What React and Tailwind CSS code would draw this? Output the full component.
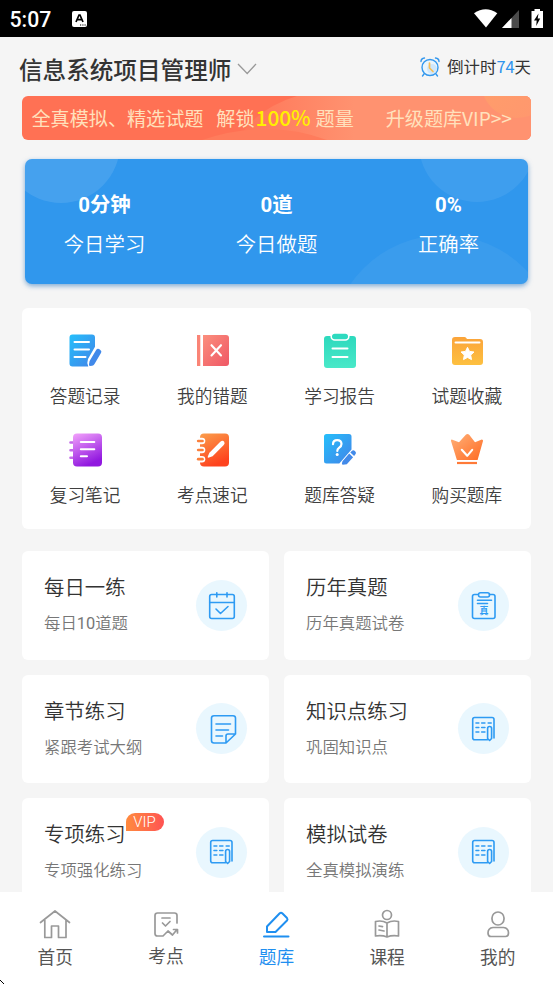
// ── App.jsx ─────────────────────────────────────────────────────────────
// Question bank home screen: status bar, subject header, VIP banner,
// today's stats, shortcut grid, practice cards and the bottom tab bar.
// ─────────────────────────────────────────────────────────────────────────

// Two-stop gradient shared by the filled shortcut icons
function Gradient({ id, from, to, x2 = 1, y2 = 1 }) {
  return (
    <linearGradient id={id} x1="0" y1="0" x2={x2} y2={y2}>
      <stop offset="0" stopColor={from} />
      <stop offset="1" stopColor={to} />
    </linearGradient>
  )
}

// ── Shortcut icons (36x36) ──
const RecordIcon = () => (
  <svg viewBox="0 0 36 36" className="size-9">
    <defs><Gradient id="rec" from="#25bffb" to="#4284e8" /></defs>
    <path d="M4.500 1.500H24a3 3 0 0 1 3 3v9.200l-7 12.300q-1.500 4 .3 7.500H4.500a3 3 0 0 1-3-3v-26a3 3 0 0 1 3-3z" fill="url(#rec)" />
    <path d="M28.300 16.800q1.100-1.700 2.800-.7l1.200.8q1.700 1 .8 2.800l-6.600 11.300q-.9 1.500-2.300 1.700l-2.200.3q-1.300-.2-1-1.700l.6-3.200z" fill="#4189ea" />
    <path d="M6.500 9H21M6.500 16.500H21M6.500 24H17.500" stroke="#fff" strokeWidth="2" strokeLinecap="round" />
  </svg>
)

const WrongIcon = () => (
  <svg viewBox="0 0 36 36" className="size-9">
    <defs><Gradient id="wrong" from="#fb8f7d" to="#ef5765" /></defs>
    <rect x="2" y="2" width="3.300" height="31" fill="#fa8476" />
    <path d="M8 2h23a3 3 0 0 1 3 3v25a3 3 0 0 1-3 3H8z" fill="url(#wrong)" />
    <path d="M16.500 12.200l9.500 10.300M26 12.200l-9.500 10.300" stroke="#fff" strokeWidth="2.100" strokeLinecap="round" />
  </svg>
)

const ReportIcon = () => (
  <svg viewBox="0 0 36 36" className="size-9 overflow-visible">
    <defs><Gradient id="report" from="#2dd9bd" to="#49e8c8" x2={0} /></defs>
    <rect x="2" y="3" width="32" height="32" rx="3" fill="url(#report)" />
    <rect x="9.200" y="0" width="17.600" height="7" rx="3.500" fill="#2ddabf" stroke="#fff" strokeWidth="1.600" />
    <path d="M10.500 15.500H25.500M10.500 24H25.500" stroke="#fff" strokeWidth="2" strokeLinecap="round" />
  </svg>
)

const FavoriteIcon = () => (
  <svg viewBox="0 0 36 36" className="size-9">
    <defs><Gradient id="fav" from="#fba43a" to="#fdc040" x2={0} /></defs>
    <path d="M6 4h9.500q1.500 0 2.500 2H31a3 3 0 0 1 3 3v20a3 3 0 0 1-3 3H6a3 3 0 0 1-3-3V7a3 3 0 0 1 3-3z" fill="url(#fav)" />
    <path d="M6.500 9.500H30.500" stroke="#fff" strokeWidth="2" strokeLinecap="round" />
    <path d="M18.500 14.300l2 4.100 4.500.6-3.300 3.100.8 4.500-4-2.200-4 2.200.8-4.500L12 19l4.500-.6z" fill="#fff" stroke="#fff" strokeLinejoin="round" />
  </svg>
)

const NotesIcon = () => (
  <svg viewBox="0 0 36 36" className="size-9">
    <defs><Gradient id="notes" from="#f3a3fb" to="#9118df" x2={0.4} /></defs>
    <path d="M2.500 10.500h4M2.500 18.200h4M2.500 25.700h4" stroke="#c46be9" strokeWidth="2.600" strokeLinecap="round" />
    <rect x="5" y="1.500" width="29" height="33" rx="4" fill="url(#notes)" />
    <path d="M12.800 10H26.300M12.800 17.200H26.300M12.800 24.200H19" stroke="#fff" strokeWidth="2" strokeLinecap="round" />
  </svg>
)

const QuickIcon = () => (
  <svg viewBox="0 0 36 36" className="size-9">
    <defs><Gradient id="quick" from="#fb9e4b" to="#fe431e" x2={0.4} /></defs>
    <rect x="5" y="1.500" width="29" height="33" rx="4" fill="url(#quick)" />
    {[9, 18, 27.200].map(y => (
      <g key={y}>
        <rect x="1" y={y - 3.3} width="9.300" height="6.600" rx="3.300" fill="#fff" />
        <path d={`M3.200 ${y}H7.500`} stroke="#fb7f3b" strokeWidth="2.700" strokeLinecap="round" />
      </g>
    ))}
    <path d="M25.300 9.800q2.400-2.100 4 .1.900 1.800-.8 3.300L17.600 24.300l-4.400 1.400q-.7-.2-.4-1.300l1.600-3.700z" fill="#fff" />
  </svg>
)

const AnswerIcon = () => (
  <svg viewBox="0 0 36 36" className="size-9">
    <defs><Gradient id="ans" from="#25bffb" to="#4284e8" /></defs>
    <path d="M4.500 2H27a2.500 2.500 0 0 1 2.500 2.500V17.500L17.300 31.500H4.500A2.500 2.500 0 0 1 2 29V4.500A2.500 2.500 0 0 1 4.500 2z" fill="url(#ans)" />
    <path d="M11 12.200q.1-4 4.200-4t4.300 3.700q0 2.200-2.500 4-1.700 1.300-1.700 3" fill="none" stroke="#fff" strokeWidth="2.200" strokeLinecap="round" />
    <circle cx="15.200" cy="22.500" r="1.500" fill="#fff" />
    <path d="M20.500 29.300l6.700-7.700 3.900 3.700-6.300 6.900-4 .6q-1-.1-.9-1.200zM28.300 20.400l1.700-1.700q1.400-1 2.900.3t.9 2.700L32.100 24z" fill="#428ae9" />
  </svg>
)

const CrownIcon = () => (
  <svg viewBox="0 0 36 36" className="size-9">
    <defs><Gradient id="crown" from="#ffb27a" to="#ff6a22" /></defs>
    <path d="M2.700 7.500l7.300 2.700 6.800-7.500q1.700-1.600 3.400 0l5.800 7.500 6.800-2.700q1.500 0 1.200 1.500L28.600 28H7.900L2 9q-.3-1.400.7-1.500z" fill="url(#crown)" />
    <path d="M8 31H28" stroke="#ff7a38" strokeWidth="2.200" />
    <path d="M12.800 17.800l5.400 6 5-6" fill="none" stroke="#fff" strokeWidth="2.100" strokeLinecap="round" strokeLinejoin="round" />
  </svg>
)

// ── Practice card icons (outlined, 30x30) ──
const outline = {
  viewBox: '0 0 30 30',
  className: 'size-[30px]',
  fill: 'none',
  stroke: '#2e9bf3',
  strokeWidth: 1.6,
  strokeLinecap: 'round',
  strokeLinejoin: 'round',
}

const CalendarIcon = () => (
  <svg {...outline}>
    <rect x="2.700" y="4.500" width="24.600" height="24" rx="2" />
    <path d="M2.700 12.500H27.300M9.800 2.700V7M20 2.700V7M9 19l4.500 4.500 7.500-7" />
  </svg>
)

const PaperIcon = () => (
  <svg {...outline}>
    <path d="M8.500 4.500H5.500Q3.500 4.500 3.500 6.500V26.500q0 2 2 2H24q2 0 2-2V6.500q0-2-2-2H20.500" />
    <rect x="9.500" y="2.700" width="11" height="4.300" rx="2" />
    <path d="M8.500 10.300H22.500M8.500 13.500H18.500" />
    <text x="15" y="24.300" textAnchor="middle" stroke="none" fill="#2e9bf3" className="font-['Noto_Sans_CJK_SC',sans-serif] text-[9px] font-bold">真</text>
  </svg>
)

const ChapterIcon = () => (
  <svg {...outline}>
    <path d="M18.500 29H7q-2.500 0-2.500-2.500V4Q4.500 1.700 7 1.700H26q2.500 0 2.500 2.300V20l-9.500 9V22q0-2 2-2h7.500M9 10H23.500M9 16H21.500M9 22h6.500" />
  </svg>
)

const SheetIcon = () => (
  <svg {...outline}>
    <path d="M18.500 25.700H5.700q-2 0-2-2V5.500q0-2 2-2H23q2 0 2 2V24" />
    <path d="M7 9h2.800M12.700 9h3.200M19.200 9h3M7 13.500h2.800M12.700 13.500h3.200M7 18h2.800M12.700 18h3.200" />
    <path d="M18.600 14.500q0-2 2-2t2 2V24.500l-2 2-2-2z" />
  </svg>
)

// ── Data ──
const STATS = [
  { value: '0分钟', label: '今日学习' },
  { value: '0道', label: '今日做题' },
  { value: '0%', label: '正确率' },
]

const SHORTCUTS = [
  { label: '答题记录', Icon: RecordIcon },
  { label: '我的错题', Icon: WrongIcon },
  { label: '学习报告', Icon: ReportIcon },
  { label: '试题收藏', Icon: FavoriteIcon },
  { label: '复习笔记', Icon: NotesIcon },
  { label: '考点速记', Icon: QuickIcon },
  { label: '题库答疑', Icon: AnswerIcon },
  { label: '购买题库', Icon: CrownIcon },
]

const PRACTICES = [
  { title: '每日一练', desc: <>每日<span className="font-normal">10</span>道题</>, Icon: CalendarIcon },
  { title: '历年真题', desc: '历年真题试卷', Icon: PaperIcon },
  { title: '章节练习', desc: '紧跟考试大纲', Icon: ChapterIcon },
  { title: '知识点练习', desc: '巩固知识点', Icon: SheetIcon },
  { title: '专项练习', desc: '专项强化练习', Icon: SheetIcon, vip: true },
  { title: '模拟试卷', desc: '全真模拟演练', Icon: SheetIcon },
]

const TABS = [
  {
    label: '首页',
    icon: <path d="M1.500 14.500L16 3 30.500 14.500M5.800 12V29.500H12.500V18h7V29.500H27V12" />,
  },
  {
    label: '考点',
    up: true,
    icon: <path d="M27 15V7.500Q27 5 24.500 5H7.500Q5 5 5 7.500V25.500Q5 28 7.500 28H13l5-5 4.500 4L27 21.500M23.500 21.500H27.500V25M12 10h8M12.500 15l3 3 4.500-4.500" />,
  },
  {
    label: '题库',
    active: true,
    icon: <path d="M4 28.500H28.500M7 24V18.500L19.500 5.500q1.500-1.400 3 0L27 10q1 1.300 0 2.500L15.500 24z" />,
  },
  {
    label: '课程',
    icon: (
      <>
        <circle cx="16" cy="7" r="4.500" />
        <path d="M4.500 13.500q6.500-1.500 11.500 1.500 5-3 11.500-1.500V28q-6.500-1-11.500 1-5-2-11.500-1zM16 15V29M8 18l3.500.7M8 22l5 1" />
      </>
    ),
  },
  {
    label: '我的',
    icon: (
      <>
        <rect x="10" y="4" width="12" height="13" rx="6" />
        <path d="M11 19.500h10.500q5 .5 5 5.500 0 3.500-3 3.500H9q-3 0-3-3.500 0-5 5-5.500z" />
      </>
    ),
  },
]

function StatusBar() {
  return (
    <div className="flex h-[37px] shrink-0 items-center bg-black pl-[9.500px] text-white">
      <span className="w-[62.500px] pt-0.5 font-['Roboto',sans-serif] text-[21.200px] font-medium">5:07</span>
      <svg viewBox="0 0 15 16" className="h-4 w-[15px]">
        <rect width="15" height="16" rx="2" fill="#fff" />
        <path d="M4 11L7 4h1l3 7M5 8.700h5" fill="none" stroke="#000" strokeWidth="1.700" />
        <path d="M8 14h1.200M10.300 14h1.200M12.500 14h1.200" stroke="#000" strokeWidth="1.200" />
      </svg>
      <svg viewBox="0 0 72 20" className="mr-[7px] ml-auto h-5 w-[72px]">
        <path d="M0 4.300Q11.700-4 23.300 4.300L12 18.500z" fill="#fff" />
        <path d="M45 1V19H28z" fill="#4b4b4b" />
        <path d="M37.500 9V19H28z" fill="#fff" />
        <path d="M57.500 2h3V0h5.500V2h3V19H57.500z" fill="#fff" />
        <path d="M64.500 4.500l-4.500 7h2.700l-.5 5.500 4-7.500h-2.500z" fill="#000" />
      </svg>
    </div>
  )
}

function Header() {
  return (
    <div className="flex h-[59px] shrink-0 items-center pr-[22px] pl-[19px]">
      <h1 className="mt-1.5 text-[23.600px] font-medium whitespace-nowrap">信息系统项目管理师</h1>
      <svg viewBox="0 0 20 12" className="mt-1 ml-1.5 h-3 w-5">
        <path d="M1 1l9.200 9.500L19 1" fill="none" stroke="#999" strokeWidth="1.300" />
      </svg>
      <svg viewBox="0 0 20 20" className="mr-[7px] ml-auto size-5" fill="none" stroke="#3398ee" strokeWidth="1.400" strokeLinecap="round">
        <circle cx="10" cy="10.500" r="8" fill="#e9f5fd" />
        <circle cx="12" cy="12" r="5" fill="#cfe7fb" stroke="none" />
        <path d="M1 4.500Q1 1.500 4.500 1M15.500 1Q19 1.500 19 4.500M4 17l-1.500 2M16 17l1.500 2" />
        <path d="M9.500 6V11l3.500 3.500" stroke="#f7bd55" strokeWidth="1.700" />
      </svg>
      <span className="text-[16.400px] whitespace-nowrap">
        倒计时<span className="text-[#2e93ed]">74</span>天
      </span>
    </div>
  )
}

function Banner() {
  return (
    <div className="relative mx-[22px] flex h-11 shrink-0 items-center overflow-hidden rounded-md bg-[#ff7154] pl-[9.500px] text-[19.100px] whitespace-nowrap text-[#ffe1bd]">
      <svg viewBox="0 0 509 44" className="absolute inset-0 h-11 w-[509px]">
        <defs>
          <linearGradient id="bannerGlow" x1="0" x2="1">
            <stop offset="0" stopColor="#ff7557" />
            <stop offset="0.400" stopColor="#ff9270" />
          </linearGradient>
          <Gradient id="bannerSun" from="#ffa069" to="#ff966f" />
        </defs>
        <path d="M215 44Q235 12 275 0H509V44z" fill="url(#bannerGlow)" />
        <path d="M180 44Q245 22 305 44z" fill="#ff7c5c" />
        <circle cx="495" cy="-14" r="36" fill="url(#bannerSun)" />
      </svg>
      <span className="relative">全真模拟、精选试题</span>
      <span className="relative ml-[13px]">解锁</span>
      <b className="relative ml-px w-[56px] font-['Noto_Sans_CJK_SC',sans-serif] text-[20.800px] font-medium text-[#fff000]">100%</b>
      <span className="relative ml-1">题量</span>
      <span className="relative ml-[32px]">升级题库VIP&gt;&gt;</span>
    </div>
  )
}

function StatsCard() {
  return (
    <div className="relative mx-[25px] mt-[19px] h-[125px] shrink-0 rounded-[7px] bg-[#3097ed] shadow-[0_2px_5px_rgba(48,120,190,0.6)]">
      <svg viewBox="0 0 503 125" className="absolute inset-0 h-[125px] w-[503px] rounded-[7px]">
        <g fill="#fff">
          <circle cx="36" cy="-15" r="59" opacity="0.100" />
          <circle cx="452" cy="-15" r="58" opacity="0.070" />
          <circle cx="419" cy="190" r="114" opacity="0.050" />
        </g>
      </svg>
      <div className="relative -mx-[6.500px] flex pt-[29px] text-white">
        {STATS.map(s => (
          <div key={s.label} className="flex flex-1 flex-col items-center">
            <span className="font-['Roboto','Noto_Sans_CJK_SC',sans-serif] text-[20.400px] leading-[34px] font-bold">{s.value}</span>
            <span className="mt-1 text-[20.400px] leading-[34px] font-[350]">{s.label}</span>
          </div>
        ))}
      </div>
    </div>
  )
}

function ShortcutGrid() {
  return (
    <div className="mx-[22px] mt-6 grid h-[221px] shrink-0 grid-cols-4 content-start rounded-md bg-white pt-[25px]">
      {SHORTCUTS.map(({ label, Icon }) => (
        <div key={label} className="flex h-[99px] flex-col items-center">
          <Icon />
          <span className="mt-[13px] pr-px text-[17.700px] leading-[27px] font-[350] text-[#404040]">{label}</span>
        </div>
      ))}
    </div>
  )
}

function PracticeCard({ title, desc, Icon, vip }) {
  return (
    <div className="flex h-[108.500px] items-center justify-between rounded-md bg-white px-[22px]">
      <div className="pb-[3px]">
        <div className="relative w-fit text-[20.400px] leading-[30px] font-[350]">
          {title}
          {vip && (
            <span className="absolute -top-[5px] left-full flex h-[18px] w-[38px] items-center justify-center rounded-t-[9px] rounded-br-[9px] bg-linear-to-r from-[#ff8a3d] to-[#ff5252] font-['Roboto',sans-serif] text-[15px] font-light text-white">
              VIP
            </span>
          )}
        </div>
        <p className="mt-[11px] font-['Roboto','Noto_Sans_CJK_SC',sans-serif] text-[16.400px] leading-6 font-[350] text-[#777]">{desc}</p>
      </div>
      <div className="flex size-[51px] items-center justify-center rounded-full bg-[#e9f7fe]">
        <Icon />
      </div>
    </div>
  )
}

function TabBar() {
  return (
    <nav className="relative flex h-[92px] shrink-0 bg-white">
      {TABS.map(t => (
        <div
          key={t.label}
          className={`flex flex-1 flex-col items-center pt-4 ${t.active ? 'text-[#1f8ff0]' : 'text-[#555]'}`}
        >
          <svg
            viewBox="0 0 32 32"
            className={`size-8 ${t.active ? 'stroke-[#1f8ff0]' : 'stroke-[#999]'}`}
            fill="none"
            strokeWidth={t.active ? 2 : 1.7}
            strokeLinecap="round"
            strokeLinejoin="round"
          >
            {t.icon}
          </svg>
          <span className={`text-[17.700px] leading-[26px] ${t.up ? 'mt-0.5' : 'mt-[3px]'}`}>{t.label}</span>
        </div>
      ))}
      {/* Pointer tip in the corner */}
      <svg viewBox="0 0 4 4" className="absolute bottom-0 left-0 size-1">
        <path d="M0 0h1v1H0zM1 1h1v1H1zM2 2h1v1H2zM3 3h1v1H3z" fill="#000" />
      </svg>
    </nav>
  )
}

export default function App() {
  return (
    <div className="flex h-[984px] w-[553px] flex-col overflow-hidden bg-[#f5f5f5] font-['Noto_Sans_CJK_SC',sans-serif] text-[#333]">
      <StatusBar />
      <main className="flex min-h-0 flex-1 flex-col overflow-hidden">
        <Header />
        <Banner />
        <StatsCard />
        <ShortcutGrid />
        <div className="mx-[22px] mt-[22px] grid shrink-0 grid-cols-2 gap-[15px]">
          {PRACTICES.map(p => (
            <PracticeCard key={p.title} {...p} />
          ))}
        </div>
      </main>
      <TabBar />
    </div>
  )
}
